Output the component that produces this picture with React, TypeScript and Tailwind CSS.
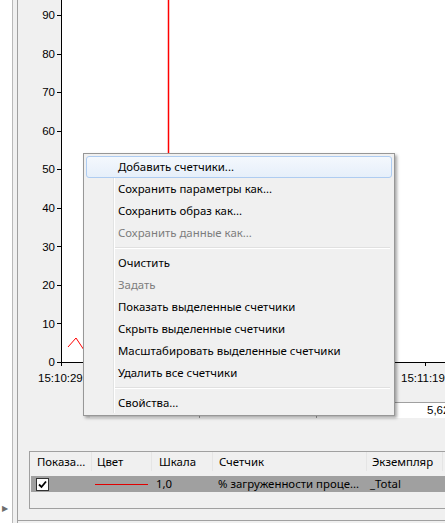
import React from "react";

const yLabels = ["90", "80", "70", "60", "50", "40", "30", "20", "10", "0"];
const tickY = [15, 54, 92, 131, 169, 208, 246, 285, 323, 362];

type Item = { label: string; disabled?: boolean; active?: boolean } | "sep";

const menuItems: Item[] = [
  { label: "Добавить счетчики...", active: true },
  { label: "Сохранить параметры как..." },
  { label: "Сохранить образ как..." },
  { label: "Сохранить данные как...", disabled: true },
  "sep",
  { label: "Очистить" },
  { label: "Задать", disabled: true },
  { label: "Показать выделенные счетчики" },
  { label: "Скрыть выделенные счетчики" },
  { label: "Масштабировать выделенные счетчики" },
  { label: "Удалить все счетчики" },
  "sep",
  { label: "Свойства..." },
];

function ContextMenu() {
  return (
    <div className="absolute left-[83px] top-[153px] w-[312px] h-[263px] border border-[#979797] bg-[#f0f0f0] p-[2px] shadow-[2px_2px_3px_rgba(0,0,0,0.35)] font-['Noto_Sans',sans-serif] text-[11.4px]">
      {/* gutter line */}
      <div className="absolute left-[29px] top-[2px] bottom-[2px] w-[2px] border-l border-[#e2e3e3] bg-white" />
      {menuItems.map((it, i) =>
        it === "sep" ? (
          <div key={i} className="h-[8px] flex flex-col justify-center pl-[28px] pr-[2px]">
            <div className="h-px bg-[#e0e0e0]" />
            <div className="h-px bg-white" />
          </div>
        ) : (
          <div
            key={i}
            className={`relative h-[22px] flex items-center pl-[31px] rounded-[3px] border ${
              it.active
                ? "border-[#aeccf1] bg-gradient-to-b from-[#f4f8fd] to-[#e6effa]"
                : "border-transparent"
            } ${it.disabled ? "text-[#7d7d7d]" : "text-black"}`}
          >
            {it.label}
          </div>
        )
      )}
    </div>
  );
}

function Chart() {
  return (
    <div className="flex h-[366px]">
      <div className="w-[39px] flex flex-col pt-[5px] pr-[2px] text-right text-[11.5px] font-['Liberation_Sans',sans-serif] text-black">
        {yLabels.map((l) => (
          <div key={l} className="h-[38.6px] shrink-0 leading-[20px]">
            {l}
          </div>
        ))}
      </div>
      <svg width="388" height="366" className="block">
        <rect x="5" y="0" width="383" height="362" fill="#ffffff" />
        {tickY.map((y) => (
          <line key={y} x1="0" x2="5" y1={y + 0.5} y2={y + 0.5} stroke="#000" />
        ))}
        <line x1="4.5" x2="4.5" y1="0" y2="366" stroke="#000" />
        <line x1="0" x2="388" y1="362.5" y2="362.5" stroke="#000" />
        <line x1="368.5" x2="368.5" y1="362" y2="366" stroke="#000" />
        <polyline
          points="11,347 19,338 27,350 40,352 60,355 80,354 100,356"
          fill="none"
          stroke="#ff0000"
          strokeWidth="1"
        />
        <line x1="111.5" x2="111.5" y1="0" y2="362" stroke="#ff0000" strokeWidth="1.5" />
      </svg>
    </div>
  );
}

export default function App() {
  return (
    <div className="relative w-[445px] h-[523px] overflow-hidden bg-[#f0f0f0] flex font-['Liberation_Sans',sans-serif]">
      {/* left tree pane */}
      <div className="w-[13px] bg-white border-r border-[#b9b9b9] flex flex-col justify-end pb-[10px]">
        <span className="text-[#6d6d6d] text-[8px] leading-none pl-[2px]">▶</span>
      </div>
      <div className="w-[4px] bg-[#f0f0f0]" />
      {/* main */}
      <div className="flex-1 border-l border-[#a0a0a0] flex flex-col min-w-0">
        <Chart />
        <div className="flex pl-[20px] h-[36px] pt-[5px] text-[11.5px] leading-[14px] whitespace-nowrap text-black">
          <span className="w-[363px] shrink-0">15:10:29</span>
          <span>15:11:19</span>
        </div>
        <div className="ml-[72px] h-[16px] border-t border-[#a0a0a0] bg-white flex text-[11.5px] leading-[14px] whitespace-nowrap overflow-hidden">
          <div className="w-[110px] shrink-0 border-r border-[#a0a0a0]" />
          <div className="w-[117px] shrink-0 border-r border-[#a0a0a0]" />
          <div className="shrink-0 pl-[110px]">5,623</div>
        </div>
        <div className="mt-[33px] ml-[11px] h-[58px] w-[430px] border border-[#a0a0a0] font-['Noto_Sans',sans-serif] text-[11.4px] text-black">
          <div className="flex h-[19px] leading-[19px] whitespace-nowrap">
            <div className="w-[62px] pl-[7px] border-r border-[#e5e5e5]">Показа...</div>
            <div className="w-[60px] pl-[5px] border-r border-[#e5e5e5]">Цвет</div>
            <div className="w-[61px] pl-[7px] border-r border-[#e5e5e5]">Шкала</div>
            <div className="w-[154px] pl-[6px] border-r border-[#e5e5e5]">Счетчик</div>
            <div className="w-[76px] pl-[5px] border-r border-[#e5e5e5]">Экземпляр</div>
          </div>
          <div className="mt-[5px] ml-[1px] h-[16px] bg-[#a0a0a0] flex items-center whitespace-nowrap">
            <div className="w-[13px] h-[13px] ml-[5px] shrink-0 bg-white border border-[#333] flex items-center justify-center">
              <svg width="9" height="9" viewBox="0 0 9 9">
                <path d="M1 4.5 L3.5 7 L8 1.5" fill="none" stroke="#000" strokeWidth="1.8" />
              </svg>
            </div>
            <div className="ml-[46px] w-[53px] shrink-0 h-px bg-[#e00000]" />
            <div className="ml-[8px] w-[62px] shrink-0">1,0</div>
            <div className="w-[152px] shrink-0">% загруженности проце...</div>
            <div>_Total</div>
          </div>
        </div>
        <div className="mt-auto h-[3px] border-t border-[#a0a0a0]" />
      </div>
      <ContextMenu />
    </div>
  );
}
